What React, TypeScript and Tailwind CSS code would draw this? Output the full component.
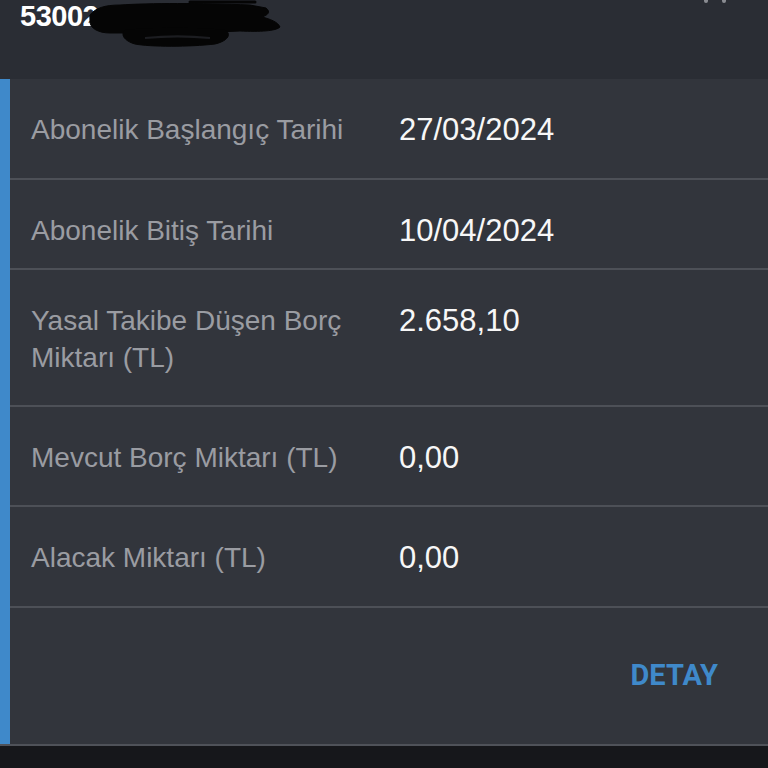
const rows = [
  { label: "Abonelik Başlangıç Tarihi", value: "27/03/2024", h: "h-[101px]" },
  { label: "Abonelik Bitiş Tarihi", value: "10/04/2024", h: "h-[90px]" },
  { label: "Yasal Takibe Düşen Borç Miktarı (TL)", value: "2.658,10", h: "h-[137px]" },
  { label: "Mevcut Borç Miktarı (TL)", value: "0,00", h: "h-[100px]" },
  { label: "Alacak Miktarı (TL)", value: "0,00", h: "h-[101px]" },
]

// marker scribble over the account number
function Scribble() {
  return (
    <svg className="absolute left-0 top-0 pointer-events-none" width="300" height="50" viewBox="0 0 300 50">
      <g fill="#050505" stroke="#050505" strokeLinecap="round" strokeLinejoin="round">
        <path d="M90 15 C95 8 105 5 120 5 C150 3 200 3 250 5 L266 8 C271 12 268 15 262 17 C270 19 278 22 280 27 C276 31 260 32 240 31 C200 33 150 33 110 33 C98 33 90 28 90 22 Z" />
        <path d="M125 30 C150 27 200 27 225 30 C232 34 228 41 215 44 C190 47 150 47 135 44 C124 41 120 34 125 30 Z" />
        <path d="M190 2 L255 2" strokeWidth="3" fill="none" />
      </g>
      <path d="M145 38 C165 36 190 36 210 38" stroke="#1c1d21" strokeWidth="2" fill="none" />
    </svg>
  )
}

export default function App() {
  return (
    <div className="w-[768px] h-[768px] overflow-hidden bg-[#16171b] font-['Liberation_Sans','Helvetica',sans-serif]">
      {/* Header */}
      <header className="relative h-[79px] bg-[#2a2d34] pl-[20px]">
        <div className="text-[29px] leading-[32px] font-bold text-white tracking-[-0.5px]">53002</div>
        <Scribble />
        <div className="absolute top-0 right-[42px] flex gap-[14px]">
          <span className="block w-[4px] h-[3px] rounded-b-full bg-[#8a8c92]" />
          <span className="block w-[4px] h-[3px] rounded-b-full bg-[#8a8c92]" />
        </div>
      </header>

      {/* Card */}
      <section className="flex h-[665px] bg-[#32353c]">
        <div className="w-[10px] shrink-0 bg-[#3f89ca]" />
        <div className="flex-1 flex flex-col">
          {rows.map((row, i) => (
            <div key={i} className={`${row.h} flex items-start border-b-2 border-[#4d5057] pt-[32px] pl-[21px]`}>
              <div className="w-[368px] shrink-0 pr-6 text-[28px] leading-[37px] text-[#9a9ca2]">{row.label}</div>
              <div className="text-[31px] leading-[37px] text-[#f7f7f7]">{row.value}</div>
            </div>
          ))}
          <div className="flex-1 flex items-center justify-end pr-[50px]">
            <span className="font-['Roboto',sans-serif] text-[29px] font-bold text-[#3f89ca]">DETAY</span>
          </div>
        </div>
      </section>
      <div className="h-[2px] bg-[#4f5259]" />
    </div>
  )
}
